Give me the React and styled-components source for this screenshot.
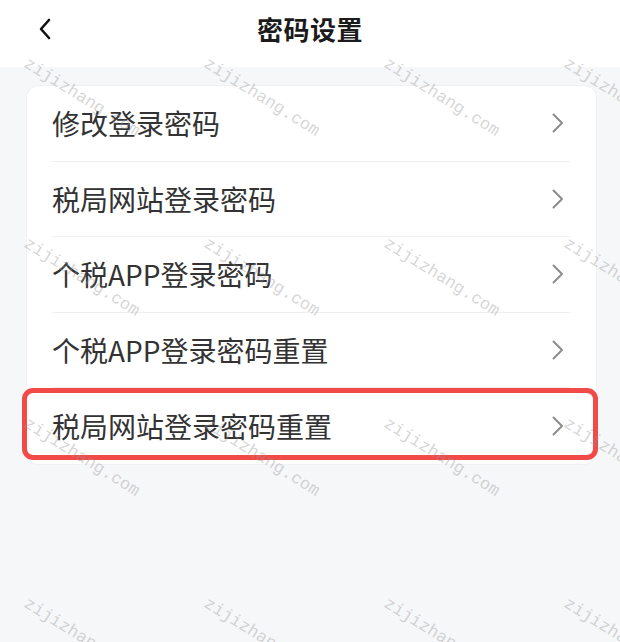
import styled, { createGlobalStyle } from 'styled-components';

const GlobalStyle = createGlobalStyle`
  html, body {
    margin: 0;
    padding: 0;
    background: #f6f7f9;
  }
  body {
    font-family: "Noto Sans CJK SC", "Noto Sans", sans-serif;
  }
`;

const Page = styled.div`
  position: relative;
  width: 620px;
  height: 642px;
  overflow: hidden;
  background: #f6f7f9;
`;

const Header = styled.header`
  height: 67px;
  background: #ffffff;
  display: grid;
  grid-template-columns: 80px 1fr 80px;
  align-items: center;
`;

const BackButton = styled.button`
  width: 80px;
  height: 56px;
  margin-top: -10px;
  padding: 0 0 0 38px;
  border: none;
  background: none;
  display: flex;
  align-items: center;
  cursor: pointer;
`;

const Title = styled.h1`
  margin: -10px 0 0;
  text-align: center;
  font-size: 26px;
  font-weight: 700;
  color: #1b1b1b;
  letter-spacing: 0.5px;
`;

const Body = styled.main`
  padding: 19px 24px 0 27px;
`;

const Card = styled.ul`
  list-style: none;
  margin: 0;
  padding: 0;
  background: #ffffff;
  border-radius: 12px;
  box-shadow: 0 0 0 1px #f0f1f3;
`;

const Row = styled.li`
  position: relative;
  height: 75.5px;
  box-sizing: border-box;
  margin: 0 26px 0 25px;
  display: flex;
  align-items: center;
  justify-content: space-between;
  border-bottom: ${({ $last }) => ($last ? 'none' : '1px solid #efefef')};
`;

const Label = styled.span`
  font-size: 28px;
  font-weight: 400;
  color: #333333;
`;

const Arrow = styled.span`
  display: flex;
  margin-right: 6px;
`;

const Highlight = styled.div`
  position: absolute;
  left: -30px;
  right: -28px;
  top: 0;
  bottom: 4px;
  border: 5px solid #f24a47;
  border-radius: 11px;
  pointer-events: none;
`;

const Watermarks = styled.div`
  position: absolute;
  inset: 0;
  padding: 55px 0 0 30px;
  display: grid;
  grid-template-columns: repeat(4, 180px);
  grid-auto-rows: 180px;
  pointer-events: none;
`;

const Mark = styled.span`
  display: block;
  transform-origin: 0 0;
  transform: rotate(32deg);
  font-family: "Liberation Mono", "DejaVu Sans Mono", monospace;
  font-size: 17px;
  line-height: 1;
  color: rgba(150, 150, 150, 0.4);
  white-space: nowrap;
`;

const items = [
  '修改登录密码',
  '税局网站登录密码',
  '个税APP登录密码',
  '个税APP登录密码重置',
  '税局网站登录密码重置',
];

const Chevron = () => (
  <svg width="12" height="20" viewBox="0 0 12 20" fill="none">
    <path d="M1.5 1.5L10 10L1.5 18.5" stroke="#8c8c8c" strokeWidth="2" strokeLinecap="round" strokeLinejoin="round" />
  </svg>
);

const BackIcon = () => (
  <svg width="14" height="22" viewBox="0 0 14 22" fill="none">
    <path d="M11 2L3 11L11 20" stroke="#111" strokeWidth="2.6" strokeLinecap="round" strokeLinejoin="round" />
  </svg>
);

export default function App() {
  return (
    <Page>
      <GlobalStyle />
      <Header>
        <BackButton aria-label="返回">
          <BackIcon />
        </BackButton>
        <Title>密码设置</Title>
        <div />
      </Header>
      <Body>
        <Card>
          {items.map((text, i) => (
            <Row key={text} $last={i === items.length - 1}>
              <Label>{text}</Label>
              <Arrow>
                <Chevron />
              </Arrow>
              {i === items.length - 1 ? <Highlight /> : null}
            </Row>
          ))}
        </Card>
      </Body>
      <Watermarks>
        {Array.from({ length: 16 }, (_, i) => (
          <div key={i}>
            <Mark>zijizhang.com</Mark>
          </div>
        ))}
      </Watermarks>
    </Page>
  );
}
